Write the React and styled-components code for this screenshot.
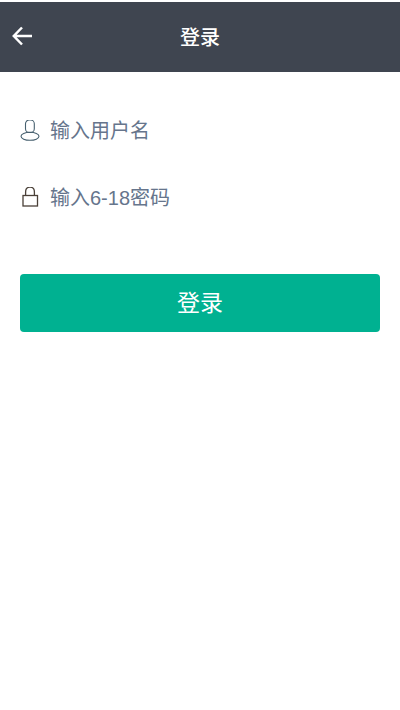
import styled, { createGlobalStyle } from 'styled-components'

const GlobalStyle = createGlobalStyle`
  html, body {
    margin: 0;
    padding: 0;
    background: #ffffff;
    font-family: "Liberation Sans", "Noto Sans CJK SC", sans-serif;
  }
`

const Page = styled.div`
  width: 400px;
  min-height: 710px;
  padding-top: 2px;
  box-sizing: border-box;
  background: #ffffff;
`

const Header = styled.header`
  display: flex;
  position: relative;
  height: 70px;
  box-sizing: border-box;
  padding-bottom: 2px;
  align-items: center;
  justify-content: center;
  background: #3f4550;
`

const BackButton = styled.button`
  display: flex;
  position: absolute;
  top: 22px;
  left: 11px;
  width: 24px;
  height: 24px;
  padding: 0;
  border: 0;
  background: transparent;
  cursor: pointer;
`

const Title = styled.h1`
  margin: 0;
  color: #ffffff;
  font-size: 20px;
  font-weight: 500;
`

const Form = styled.form`
  display: flex;
  flex-direction: column;
  padding: 26px 20px 0;
`

const Field = styled.label`
  display: flex;
  height: 67px;
  align-items: center;
  gap: 10px;
`

const IconSlot = styled.span`
  display: flex;
  width: 20px;
  height: 24px;
  align-items: center;
  justify-content: center;
`

const Input = styled.input`
  flex: 1;
  min-width: 0;
  padding: 0;
  border: 0;
  outline: 0;
  background: transparent;
  color: #333333;
  font-family: inherit;
  font-size: 20px;

  &::placeholder {
    color: #66758c;
    opacity: 1;
  }
`

const SubmitButton = styled.button`
  height: 58px;
  margin-top: 42px;
  padding: 0 0 4px;
  border: 0;
  border-radius: 4px;
  background: #00b191;
  color: #ffffff;
  font-family: inherit;
  font-size: 23px;
  cursor: pointer;
`

export default function App() {
  return (
    <Page>
      <GlobalStyle />
      <Header>
        <BackButton type="button" aria-label="返回">
          <svg width="24" height="24" viewBox="0 0 24 24" fill="none" stroke="#ffffff" strokeWidth="2.5">
            <path d="M21 12H3.500M11 3.500L2.800 12l8.200 8.500" />
          </svg>
        </BackButton>
        <Title>登录</Title>
      </Header>

      <Form onSubmit={(event) => event.preventDefault()}>
        <Field>
          <IconSlot>
            <svg width="20" height="24" viewBox="0 0 20 24" fill="none" stroke="#47606f" strokeWidth="1.1">
              <rect x="5.500" y="0" width="8.800" height="12.500" rx="3.800" />
              <ellipse cx="10" cy="16.300" rx="9" ry="4" />
            </svg>
          </IconSlot>
          <Input type="text" placeholder="输入用户名" />
        </Field>
        <Field>
          <IconSlot>
            <svg width="20" height="24" viewBox="0 0 20 24" fill="none" stroke="#4a4038" strokeWidth="1.3">
              <rect x="3" y="8.500" width="14.500" height="10.500" />
              <path d="M5.600 8.500V5C5.600 1.800 7.400.200 10 .200S14.400 1.800 14.400 5v3.500" />
            </svg>
          </IconSlot>
          <Input type="password" placeholder="输入6-18密码" />
        </Field>
        <SubmitButton type="submit">登录</SubmitButton>
      </Form>
    </Page>
  )
}
